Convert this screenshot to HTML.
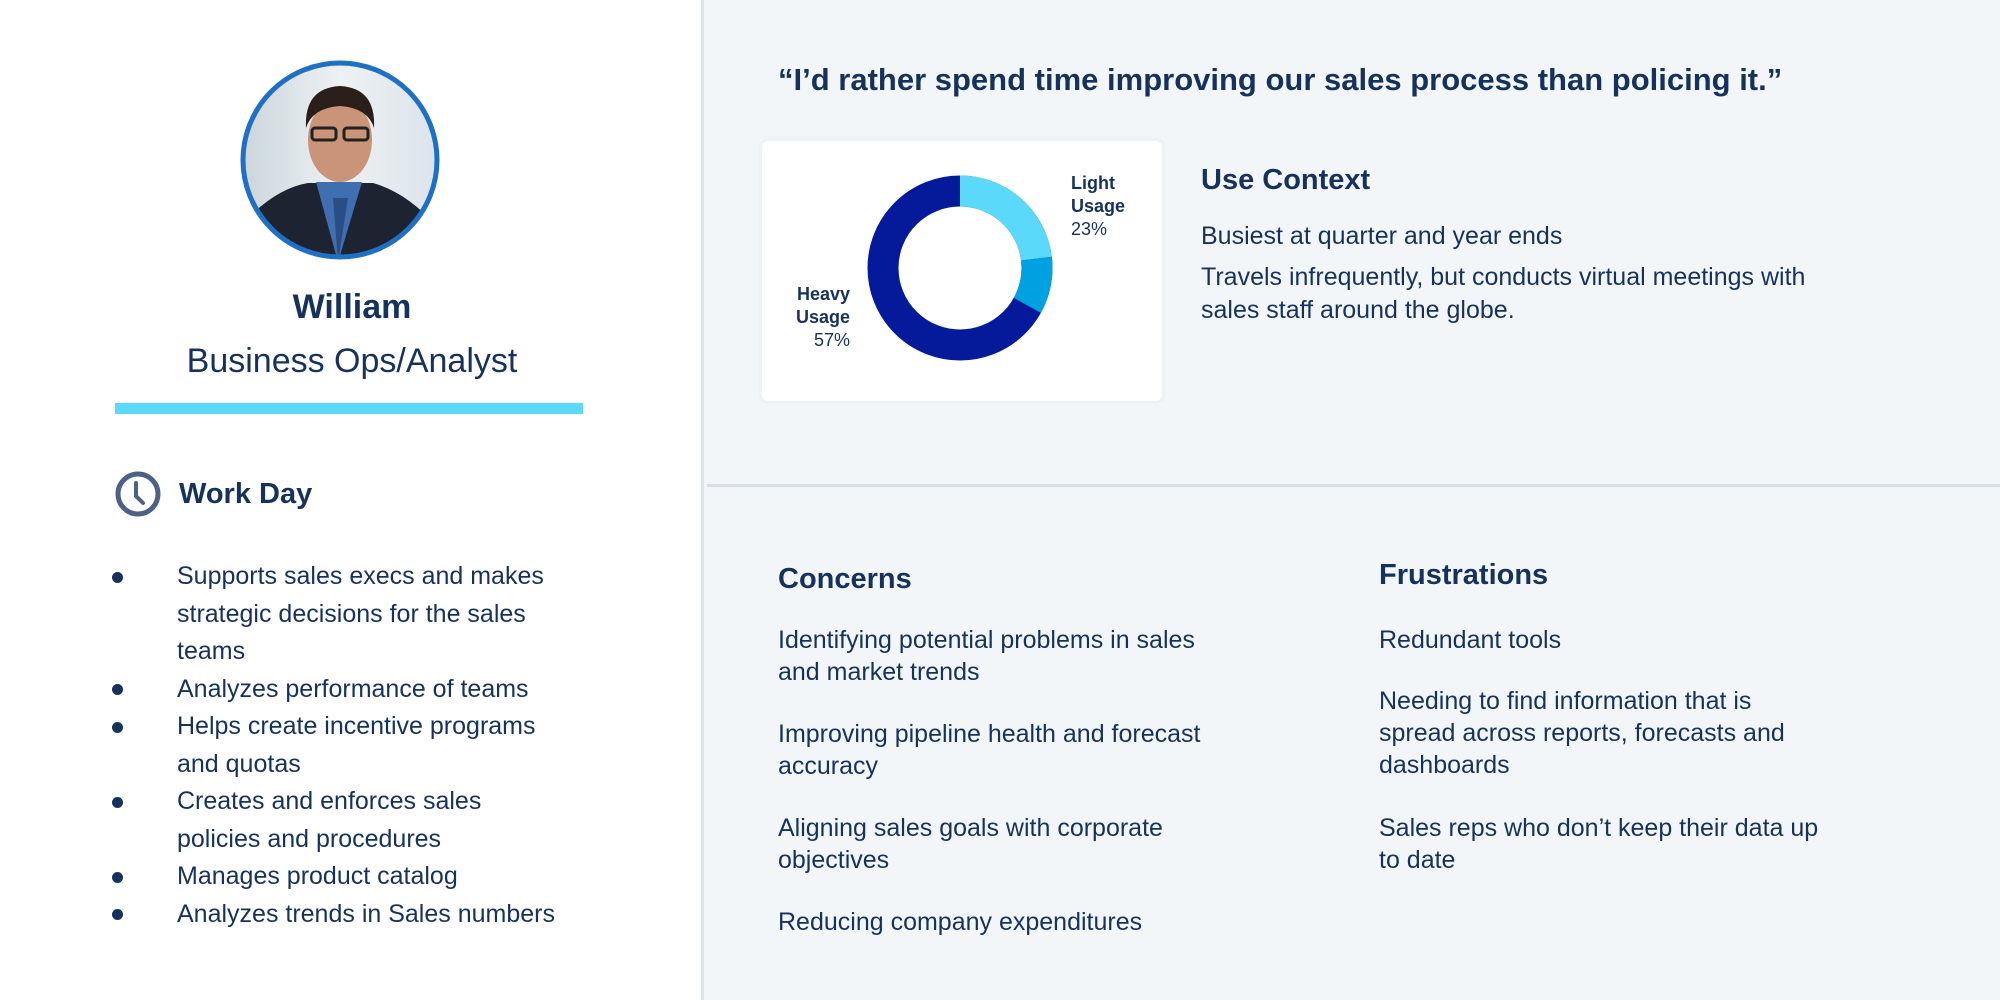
<!DOCTYPE html>
<html><head><meta charset="utf-8"><style>
*{margin:0;padding:0;box-sizing:border-box}
body{width:2000px;height:1000px;overflow:hidden;font-family:"Liberation Sans",sans-serif;color:#16325c;background:#f3f6f9;position:relative}
.left{position:absolute;left:0;top:0;width:704px;height:1000px;background:#fff;border-right:3px solid #dde3ea}
.a{position:absolute;white-space:nowrap}
.li{position:absolute;left:177px;font-size:25px;line-height:37.5px;white-space:nowrap}
.dot{position:absolute;left:112px;width:11px;height:11px;border-radius:50%;background:#16325c}
.p{position:absolute;font-size:25px;line-height:32px;white-space:nowrap}
</style></head><body>
<div class="left">
<svg class="a" style="left:238px;top:58px" width="204" height="204" viewBox="0 0 204 204">
<defs><clipPath id="c"><circle cx="102" cy="102" r="96"/></clipPath>
<linearGradient id="bg" x1="0" x2="1"><stop offset="0" stop-color="#c9d4da"/><stop offset=".5" stop-color="#eef1f3"/><stop offset="1" stop-color="#dbe3ea"/></linearGradient></defs>
<g clip-path="url(#c)">
<rect width="204" height="204" fill="url(#bg)"/>
<path d="M0 204 L10 160 Q40 130 70 125 L135 125 Q170 135 200 170 L204 204Z" fill="#1d2330"/>
<path d="M78 124 L100 204 L124 124Z" fill="#3f6fb0"/>
<path d="M95 140 L100 204 L110 140Z" fill="#2b4d86"/>
<ellipse cx="102" cy="82" rx="32" ry="42" fill="#c99478"/>
<path d="M68 70 Q66 30 102 28 Q138 30 136 70 Q130 50 102 48 Q74 50 68 70Z" fill="#2a1e1a"/>
<rect x="74" y="70" width="24" height="12" rx="3" fill="none" stroke="#222" stroke-width="3"/>
<rect x="106" y="70" width="24" height="12" rx="3" fill="none" stroke="#222" stroke-width="3"/>
</g>
<circle cx="102" cy="102" r="97" fill="none" stroke="#1f6fc4" stroke-width="5"/>
</svg>
<div class="a" style="left:0;width:704px;text-align:center;top:288px;font-size:34px;font-weight:bold">William</div>
<div class="a" style="left:0;width:704px;text-align:center;top:342px;font-size:34px">Business Ops/Analyst</div>
<div class="a" style="left:115px;top:403px;width:468px;height:11px;background:#5bd9fa"></div>
<svg class="a" style="left:114px;top:470px" width="48" height="48" viewBox="0 0 48 48"><circle cx="24" cy="24" r="20" fill="none" stroke="#4d6185" stroke-width="5"/><path d="M22 13 L22 26 L29 33" fill="none" stroke="#4d6185" stroke-width="4" stroke-linecap="round"/></svg>
<div class="a" style="left:179px;top:478px;font-size:29px;font-weight:bold">Work Day</div>
<div class="dot" style="top:572px"></div><div class="li" style="top:558px">Supports sales execs and makes<br>strategic decisions for the sales<br>teams</div>
<div class="dot" style="top:684px"></div><div class="li" style="top:671px">Analyzes performance of teams</div>
<div class="dot" style="top:722px"></div><div class="li" style="top:708px">Helps create incentive programs<br>and quotas</div>
<div class="dot" style="top:797px"></div><div class="li" style="top:783px">Creates and enforces sales<br>policies and procedures</div>
<div class="dot" style="top:872px"></div><div class="li" style="top:858px">Manages product catalog</div>
<div class="dot" style="top:909px"></div><div class="li" style="top:896px">Analyzes trends in Sales numbers</div>
</div>
<div class="a" style="left:778px;top:62px;font-size:31px;font-weight:bold">“I’d rather spend time improving our sales process than policing it.”</div>
<div class="a" style="left:762px;top:141px;width:400px;height:260px;background:#fff;border-radius:6px;box-shadow:0 0 0 3px #eef1f5"></div>
<svg class="a" style="left:860px;top:168px" width="200" height="200" viewBox="0 0 200 200">
<g transform="rotate(-90 100 100)">
<circle cx="100" cy="100" r="77" fill="none" stroke="#051a9b" stroke-width="31"/>
<circle cx="100" cy="100" r="77" fill="none" stroke="#5bd9fa" stroke-width="31" stroke-dasharray="111.5 400"/>
<circle cx="100" cy="100" r="77" fill="none" stroke="#00a1e0" stroke-width="31" stroke-dasharray="0 111.5 48.4 400"/>
</g></svg>
<div class="a" style="left:1071px;top:172px;font-size:18px;font-weight:bold;line-height:23px">Light<br>Usage<br><span style="font-weight:normal">23%</span></div>
<div class="a" style="left:780px;top:283px;width:70px;text-align:right;font-size:18px;font-weight:bold;line-height:23px">Heavy<br>Usage<br><span style="font-weight:normal">57%</span></div>
<div class="a" style="left:1201px;top:164px;font-size:29px;font-weight:bold">Use Context</div>
<div class="p" style="left:1201px;top:220px">Busiest at quarter and year ends</div>
<div class="p" style="left:1201px;top:261px;line-height:33px">Travels infrequently, but conducts virtual meetings with<br>sales staff around the globe.</div>
<div class="a" style="left:707px;top:484px;width:1293px;height:3px;background:#d8dee5"></div>
<div class="a" style="left:778px;top:563px;font-size:29px;font-weight:bold">Concerns</div>
<div class="p" style="left:778px;top:624px">Identifying potential problems in sales<br>and market trends</div>
<div class="p" style="left:778px;top:718px">Improving pipeline health and forecast<br>accuracy</div>
<div class="p" style="left:778px;top:812px">Aligning sales goals with corporate<br>objectives</div>
<div class="p" style="left:778px;top:906px">Reducing company expenditures</div>
<div class="a" style="left:1379px;top:559px;font-size:29px;font-weight:bold">Frustrations</div>
<div class="p" style="left:1379px;top:624px">Redundant tools</div>
<div class="p" style="left:1379px;top:685px">Needing to find information that is<br>spread across reports, forecasts and<br>dashboards</div>
<div class="p" style="left:1379px;top:812px">Sales reps who don’t keep their data up<br>to date</div>
</body></html>
